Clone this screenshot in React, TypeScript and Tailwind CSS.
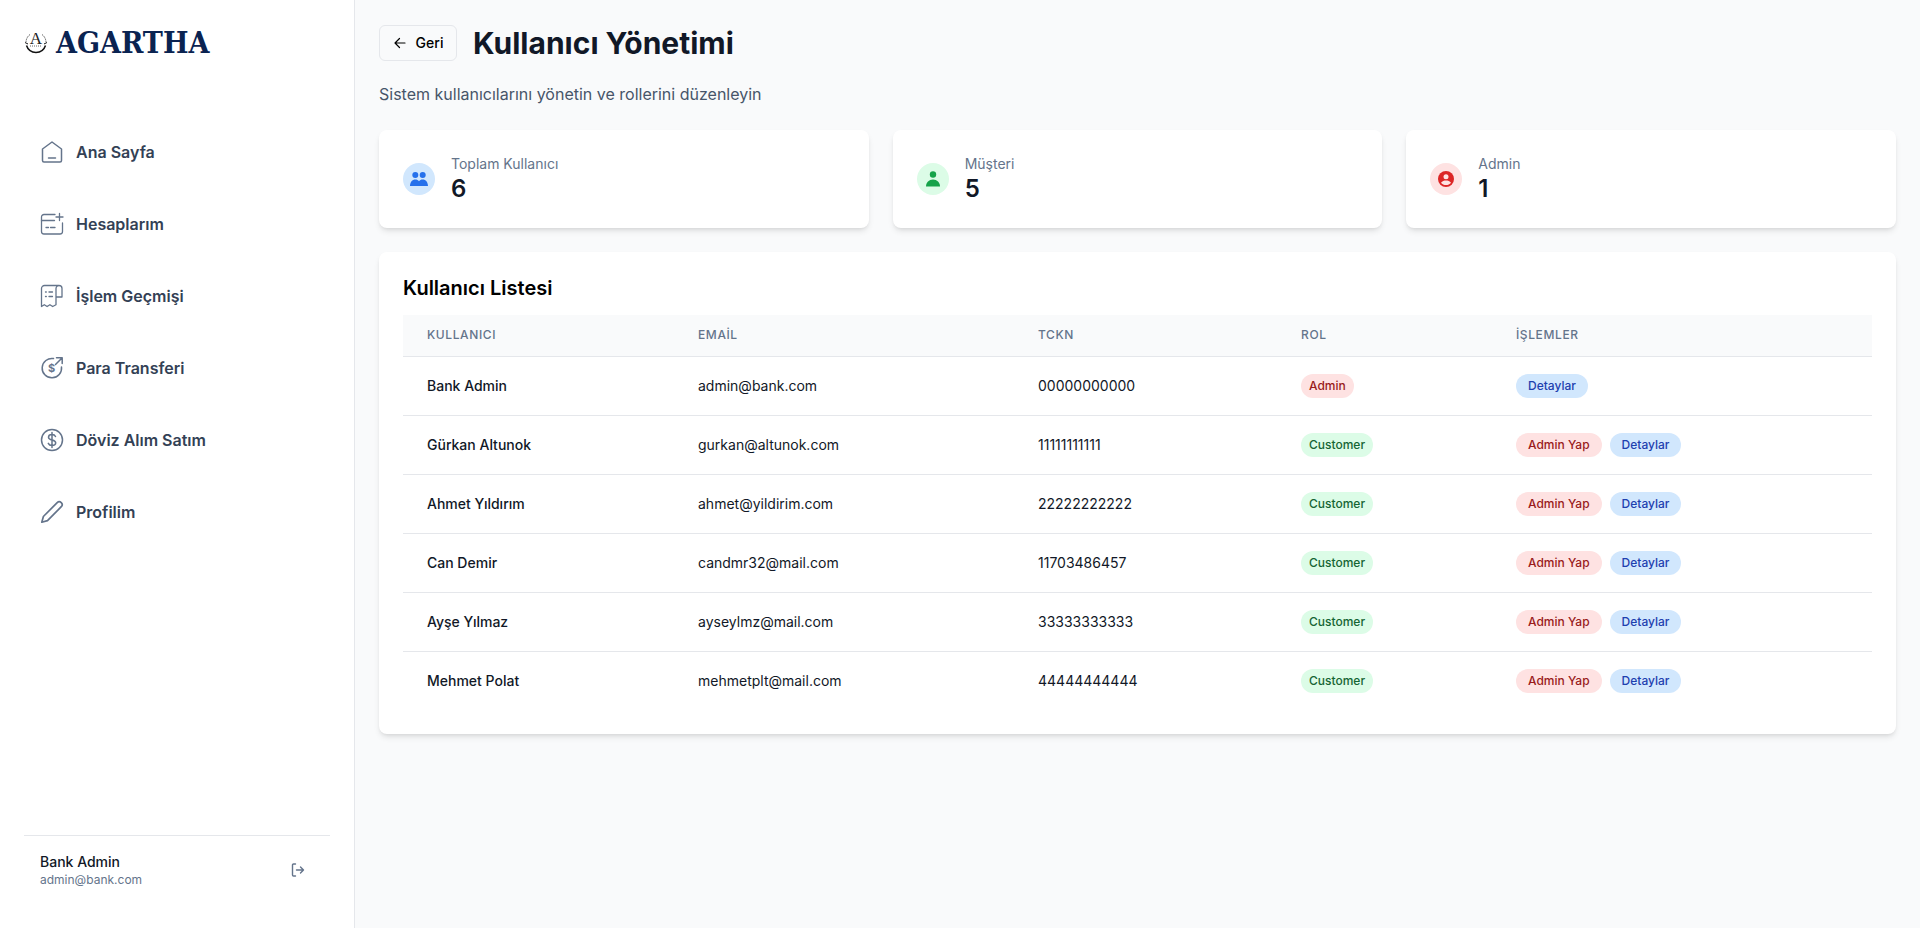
import React from "react";

const font = { fontFamily: "Inter, sans-serif" };

function Logo() {
  return (
    <svg width="24" height="24" viewBox="0 0 24 24" fill="none" className="shrink-0">
      <path d="M6 4.500A10 10 0 0 0 2 12" stroke="#111" strokeWidth="0.9" strokeDasharray="1 1" />
      <path d="M18 4.500A10 10 0 0 1 22 12" stroke="#111" strokeWidth="0.9" strokeDasharray="1 1" />
      <path d="M2.500 15.500a10 10 0 0 0 19 0" stroke="#111" strokeWidth="1.500" />
      <path d="M1 12.500l3 1.500M23 12.500l-3 1.500" stroke="#111" strokeWidth="1" />
      <path d="M6 16h12" stroke="#666" strokeWidth="1" strokeDasharray="1 1" />
      <text x="12" y="14" textAnchor="middle" fontSize="17" fontFamily="Liberation Serif, serif" fill="#222">A</text>
    </svg>
  );
}

const ic = { fill: "none", stroke: "#64748b", strokeWidth: 1.5, strokeLinecap: "round", strokeLinejoin: "round" } as const;

function HomeIcon() {
  return (
    <svg width="24" height="24" viewBox="0 0 24 24" {...ic}>
      <path d="M2.500 9 12 2l9.500 7v11.500a1.500 1.500 0 0 1-1.500 1.500H4a1.500 1.500 0 0 1-1.500-1.500V9Z" />
      <path d="M8.500 18h7" />
    </svg>
  );
}
function CardIcon() {
  return (
    <svg width="24" height="24" viewBox="0 0 24 24" {...ic} strokeWidth={1.3}>
      <path d="M15 2.500H4A2.500 2.500 0 0 0 1.500 5v14.500A2.500 2.500 0 0 0 4 22h16a2.500 2.500 0 0 0 2.500-2.500V11" />
      <path d="M1.500 8.500h13" />
      <path d="M19.500 1.500v7M16 5h7" />
      <path d="M6 15.500h2.500M10.500 15.500H15" />
    </svg>
  );
}
function ReceiptIcon() {
  return (
    <svg width="24" height="24" viewBox="0 0 24 24" {...ic} strokeWidth={1.3}>
      <path d="M19 1.500H4.500a3 3 0 0 0-3 3V22.500l2.800-1.800 2.800 1.800 2.800-1.800 2.800 1.800 3.300-1.800V4.500a3 3 0 0 1 3-3 3 3 0 0 1 3 3V13H16" />
      <path d="M5.500 8h.8M9 8h3.500M5.500 12.500h.8M9 12.500h3.500" />
    </svg>
  );
}
function TransferIcon() {
  return (
    <svg width="24" height="24" viewBox="0 0 24 24" {...ic}>
      <path d="M13.500 2.600A9.700 9.700 0 1 0 21.500 11" />
      <path d="M15.500 8.500 22 2M16.500 1.800h5.700v5.700" />
      <text x="11.500" y="16" textAnchor="middle" fontSize="11" fontWeight="700" fontFamily="Inter, sans-serif" fill="#64748b" stroke="none">$</text>
    </svg>
  );
}
function DollarIcon() {
  return (
    <svg width="24" height="24" viewBox="0 0 24 24" {...ic}>
      <circle cx="12" cy="12" r="10.500" />
      <path d="M15.500 8.500c-.6-1.300-1.900-2-3.500-2-2 0-3.500 1-3.500 2.700 0 3.800 7.200 1.800 7.200 5.600 0 1.700-1.600 2.700-3.700 2.700-1.700 0-3.100-.8-3.700-2.100M12 4.500v15" />
    </svg>
  );
}
function PencilIcon() {
  return (
    <svg width="24" height="24" viewBox="0 0 24 24" {...ic} strokeWidth={1.7}>
      <path d="M17.200 2.600a2.900 2.900 0 0 1 4.100 4.100L7.500 20.600 1.800 22.200l1.600-5.700L17.200 2.600Z" />
    </svg>
  );
}
function LogoutIcon() {
  return (
    <svg width="16" height="16" viewBox="0 0 16 16" fill="none" stroke="#64748b" strokeWidth="1.400" strokeLinecap="round" strokeLinejoin="round">
      <path d="M5.500 2H3.500A1 1 0 0 0 2.500 3v10a1 1 0 0 0 1 1h2" />
      <path d="M6.500 8h7M10.500 5l3 3-3 3" />
    </svg>
  );
}

const menu = [
  { label: "Ana Sayfa", icon: <HomeIcon /> },
  { label: "Hesaplarım", icon: <CardIcon /> },
  { label: "İşlem Geçmişi", icon: <ReceiptIcon /> },
  { label: "Para Transferi", icon: <TransferIcon /> },
  { label: "Döviz Alım Satım", icon: <DollarIcon /> },
  { label: "Profilim", icon: <PencilIcon /> },
];

const users = [
  { name: "Bank Admin", email: "admin@bank.com", tckn: "00000000000", role: "Admin" },
  { name: "Gürkan Altunok", email: "gurkan@altunok.com", tckn: "11111111111", role: "Customer" },
  { name: "Ahmet Yıldırım", email: "ahmet@yildirim.com", tckn: "22222222222", role: "Customer" },
  { name: "Can Demir", email: "candmr32@mail.com", tckn: "11703486457", role: "Customer" },
  { name: "Ayşe Yılmaz", email: "ayseylmz@mail.com", tckn: "33333333333", role: "Customer" },
  { name: "Mehmet Polat", email: "mehmetplt@mail.com", tckn: "44444444444", role: "Customer" },
];

function Sidebar() {
  return (
    <aside className="w-[355px] h-[928px] shrink-0 bg-white border-r border-gray-200 flex flex-col px-6">
      <div className="h-[84px] flex items-center gap-[8px]">
        <Logo />
        <span className="text-[30px] pt-px font-bold text-[#0a2351] leading-none" style={{ fontFamily: "'DejaVu Serif Condensed', 'DejaVu Serif', serif" }}>
          AGARTHA
        </span>
      </div>
      <nav className="flex-1 mt-[32px] flex flex-col">
        {menu.map((m) => (
          <a key={m.label} className="h-[72px] flex items-center gap-3 pl-[16px] text-base font-semibold text-[#334155]">
            {m.icon}
            <span>{m.label}</span>
          </a>
        ))}
      </nav>
      <div className="h-[93px] border-t border-gray-200 flex items-start justify-between pt-4 pl-[16px] pr-[24px]">
        <div className="flex flex-col">
          <span className="text-sm font-medium leading-5 text-[#111827]">Bank Admin</span>
          <span className="text-xs leading-4 text-[#64748b]">admin@bank.com</span>
        </div>
        <div className="mt-[10px]">
          <LogoutIcon />
        </div>
      </div>
    </aside>
  );
}

function StatCard({ label, value, circle, icon }: { label: string; value: string; circle: string; icon: React.ReactNode }) {
  return (
    <div className="flex-1 h-[98px] bg-white rounded-lg shadow-md flex items-center gap-4 px-6">
      <div className={`w-8 h-8 rounded-full flex items-center justify-center ${circle}`}>{icon}</div>
      <div className="flex flex-col">
        <span className="text-sm leading-5 text-[#64748b]">{label}</span>
        <span className="text-2xl leading-[30px] font-semibold text-[#111827]">{value}</span>
      </div>
    </div>
  );
}

function Pill({ color, children }: { color: string; children: React.ReactNode }) {
  return <button className={`h-6 px-3 rounded-full text-xs font-medium ${color}`}>{children}</button>;
}

export default function App() {
  return (
    <div className="flex w-full min-h-[928px] bg-[#f9fafb]" style={font}>
      <Sidebar />
      <main className="flex-1 p-6">
        <div className="flex items-center gap-4 h-[36px] mt-px">
          <button className="h-[36px] w-[78px] border border-gray-200 rounded-md flex items-center justify-center gap-[9px] text-sm font-medium text-black">
            <svg width="14" height="14" viewBox="0 0 14 14" fill="none" stroke="#000" strokeWidth="1.200" strokeLinecap="round" strokeLinejoin="round">
              <path d="M12 7H2M6.500 2.500 2 7l4.500 4.500" />
            </svg>
            Geri
          </button>
          <h1 className="text-3xl font-bold text-[#111827]">Kullanıcı Yönetimi</h1>
        </div>
        <p className="mt-[21px] text-base leading-6 text-[#475569]">Sistem kullanıcılarını yönetin ve rollerini düzenleyin</p>

        <div className="mt-6 flex gap-6">
          <StatCard
            label="Toplam Kullanıcı"
            value="6"
            circle="bg-[#d1e7fd]"
            icon={
              <svg width="18" height="18" viewBox="0 0 18 18" fill="#2570eb">
                <circle cx="5.300" cy="5" r="3" />
                <circle cx="12.700" cy="5" r="3" />
                <path d="M0 16c0-3.800 2.300-6.500 5.300-6.500 1.600 0 2.900.6 3.700 1.700.8-1.100 2.100-1.700 3.700-1.700 3 0 5.300 2.700 5.300 6.500H0Z" />
              </svg>
            }
          />
          <StatCard
            label="Müşteri"
            value="5"
            circle="bg-[#dcfce7]"
            icon={
              <svg width="18" height="18" viewBox="0 0 18 18" fill="#16a34a">
                <circle cx="9" cy="4.500" r="3.200" />
                <path d="M2 16.500c0-4 3-7 7-7s7 3 7 7H2Z" />
              </svg>
            }
          />
          <StatCard
            label="Admin"
            value="1"
            circle="bg-[#fee2e2]"
            icon={
              <svg width="16" height="16" viewBox="0 0 16 16">
                <circle cx="8" cy="8" r="8" fill="#dc2626" />
                <circle cx="8" cy="5.800" r="2.500" fill="#fee2e2" />
                <path d="M3 11.700C4.200 10 6 9.500 8 9.500s3.800.5 5 2.200C11.800 13.300 10 14 8 14s-3.800-.7-5-2.300Z" fill="#fee2e2" />
              </svg>
            }
          />
        </div>

        <section className="mt-6 bg-white rounded-lg shadow-md px-6 pt-[22px] pb-6 h-[482px]">
          <h2 className="text-xl leading-7 font-semibold text-black">Kullanıcı Listesi</h2>
          <table className="w-full mt-[13px] table-fixed border-collapse text-sm">
            <colgroup>
              <col className="w-[271px]" />
              <col className="w-[340px]" />
              <col className="w-[263px]" />
              <col className="w-[215px]" />
              <col />
            </colgroup>
            <thead className="bg-[#f9fafb] border-b border-gray-200">
              <tr className="h-[41px]">
                {["KULLANICI", "EMAİL", "TCKN", "ROL", "İŞLEMLER"].map((h) => (
                  <th key={h} className="px-6 text-left text-xs font-medium tracking-wider text-[#64748b]">
                    {h}
                  </th>
                ))}
              </tr>
            </thead>
            <tbody>
              {users.map((u, i) => (
                <tr key={u.email} className={`h-[59px] ${i < users.length - 1 ? "border-b border-gray-200" : ""}`}>
                  <td className="px-6 font-medium text-[#111827]">{u.name}</td>
                  <td className="px-6 text-[#111827]">{u.email}</td>
                  <td className="px-6 text-[#111827]">{u.tckn}</td>
                  <td className="px-6">
                    <span
                      className={`inline-flex items-center h-6 px-2 rounded-full text-xs font-medium ${
                        u.role === "Admin" ? "bg-[#fee2e2] text-[#991b1b]" : "bg-[#dcfce7] text-[#166534]"
                      }`}
                    >
                      {u.role}
                    </span>
                  </td>
                  <td className="px-6">
                    <div className="flex gap-2">
                      {u.role !== "Admin" && <Pill color="bg-[#fee2e2] text-[#991b1b]">Admin Yap</Pill>}
                      <Pill color="bg-[#d1e7fd] text-[#1e40af]">Detaylar</Pill>
                    </div>
                  </td>
                </tr>
              ))}
            </tbody>
          </table>
        </section>
      </main>
    </div>
  );
}
